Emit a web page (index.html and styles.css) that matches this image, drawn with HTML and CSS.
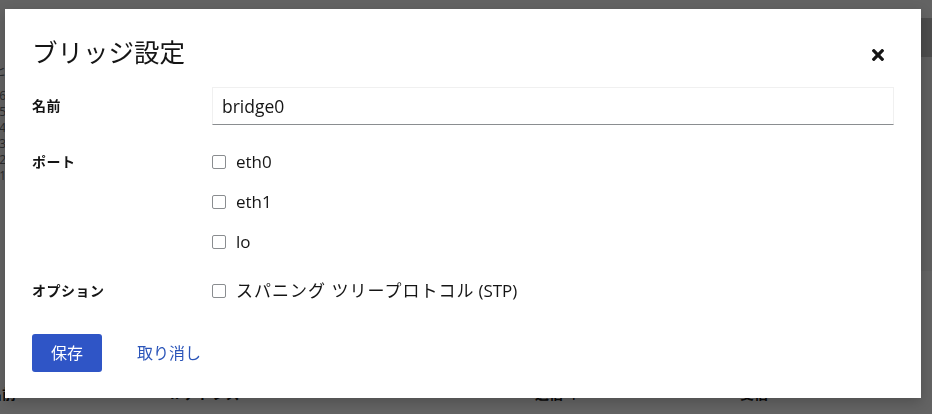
FILE: index.html
```html
<!DOCTYPE html>
<html lang="ja">
<head>
<meta charset="utf-8">
<title>ブリッジ設定</title>
<link rel="stylesheet" href="styles.css">
</head>
<body>
<div class="page">
  <div class="top">
    <div class="axis">
      <span class="axis-title">ヒ</span>
      <span>6</span><span>5</span><span>4</span><span>3</span><span>2</span><span>1</span>
    </div>
    <div class="spacer"></div>
    <div class="side">
      <div class="side-head"></div>
      <div class="side-body"></div>
      <div class="side-band"></div>
    </div>
  </div>
  <div class="thead">
    <span>名前</span><span>IPアドレス</span><span>送信 ↑</span><span>受信</span>
  </div>
</div>

<div class="backdrop">
  <div class="modal" role="dialog" aria-labelledby="mtitle">
    <header class="modal-header">
      <h1 class="modal-title" id="mtitle">ブリッジ設定</h1>
      <button class="close" aria-label="閉じる">
        <svg width="12" height="12" viewBox="0 80 352 352" aria-hidden="true"><path fill="#151515" d="M242.72 256l100.07-100.07c12.28-12.28 12.28-32.19 0-44.48l-22.24-22.24c-12.28-12.28-32.19-12.28-44.48 0L176 189.28 75.93 89.21c-12.28-12.28-32.19-12.28-44.48 0L9.21 111.45c-12.28 12.28-12.28 32.19 0 44.48L109.28 256 9.21 356.07c-12.28 12.28-12.28 32.19 0 44.48l22.24 22.24c12.28 12.28 32.2 12.28 44.48 0L176 322.72l100.07 100.07c12.28 12.28 32.2 12.28 44.48 0l22.24-22.24c12.28-12.28 12.28-32.19 0-44.48L242.72 256z"/></svg>
      </button>
    </header>
    <form class="form">
      <label class="form-label" for="name">名前</label>
      <div class="form-control"><input class="text-input" id="name" type="text" value="bridge0"></div>

      <div class="form-label">ポート</div>
      <div class="checks">
        <label class="check"><input type="checkbox"><span>eth0</span></label>
        <label class="check"><input type="checkbox"><span>eth1</span></label>
        <label class="check"><input type="checkbox"><span>lo</span></label>
      </div>

      <div class="form-label">オプション</div>
      <div class="checks">
        <label class="check"><input type="checkbox"><span class="jp-label">スパニング ツリープロトコル</span><span>(STP)</span></label>
      </div>
    </form>
    <footer class="modal-footer">
      <button class="btn btn-primary">保存</button>
      <button class="btn btn-link">取り消し</button>
    </footer>
  </div>
</div>
</body>
</html>
```
FILE: styles.css
```css
* { box-sizing: border-box; }
html, body { margin: 0; padding: 0; }
body {
  font-family: "Open Sans", "Noto Sans CJK JP", sans-serif;
  color: #151515;
  background: #fff;
  overflow: hidden;
}

/* background page */
.page {
  height: 100vh;
  display: flex;
  flex-direction: column;
  background: #fff;
}
.top { flex: 1; display: flex; }
.axis {
  width: 6px;
  display: flex;
  flex-direction: column;
  align-items: flex-end;
  padding-top: 64px;
  font-size: 12px;
  line-height: 16px;
  color: #6a6e73;
  white-space: nowrap;
}
.axis-title { margin-bottom: 8px; }
.spacer { flex: 1; }
.side {
  width: 11px;
  display: flex;
  flex-direction: column;
  padding-top: 18px;
}
.side-head { height: 39px; background: #c4c4c4; }
.side-body { height: 214px; background: #f3f3f3; }
.side-band { height: 16px; background: #fff; }
.thead {
  display: grid;
  grid-template-columns: 182px 365px 205px 1fr;
  margin-left: -12px;
  padding-bottom: 10px;
  font-size: 14px;
  font-weight: 700;
  line-height: 20px;
}

/* overlay */
.backdrop {
  position: fixed;
  inset: 0;
  background: rgba(3, 3, 3, 0.62);
  display: flex;
  align-items: flex-start;
  padding: 9px 0 0 5px;
}
.modal {
  width: 916px;
  background: #fff;
  padding: 27px 27px 26px;
  box-shadow: 0 4px 12px rgba(0, 0, 0, 0.2);
}
.modal-header {
  display: flex;
  align-items: center;
  justify-content: space-between;
}
.modal-title {
  margin: 0;
  font-size: 25.5px;
  font-weight: 400;
  line-height: 32px;
}
.close {
  border: 0;
  background: none;
  padding: 10px;
  margin: 3px 0 -3px;
  width: 32px;
  height: 32px;
  display: flex;
  align-items: center;
  justify-content: center;
  cursor: pointer;
}

.form {
  display: grid;
  grid-template-columns: 180px 1fr;
  row-gap: 25px;
  margin-top: 19px;
}
.form-label {
  font-size: 14px;
  font-weight: 700;
  line-height: 24px;
  letter-spacing: 0.5px;
}
.form-label[for] { align-self: center; }
.text-input {
  display: block;
  width: 100%;
  height: 38px;
  border: 1px solid #f0f0f0;
  border-bottom-color: #8a8d90;
  padding: 0 9px;
  font: inherit;
  font-size: 17.5px;
  color: #151515;
  outline: none;
}
.checks {
  display: flex;
  flex-direction: column;
  gap: 16px;
}
.check {
  display: flex;
  align-items: center;
  gap: 10px;
  font-size: 17px;
  line-height: 24px;
}
.check .jp-label {
  letter-spacing: 1px;
  margin-right: -6px;
}
.check input {
  appearance: none;
  -webkit-appearance: none;
  margin: 0;
  width: 14px;
  height: 14px;
  border: 1px solid #8a8d90;
  border-radius: 2px;
  background: #fff;
  flex: none;
}

.modal-footer {
  display: flex;
  align-items: center;
  gap: 19px;
  margin-top: 31px;
}
.btn {
  font: inherit;
  font-size: 16px;
  border: 0;
  cursor: pointer;
  height: 38px;
  line-height: 24px;
}
.btn-primary {
  background: #2f55c6;
  color: #fff;
  border-radius: 3px;
  padding: 0 19px;
}
.btn-link {
  background: none;
  color: #2b55b9;
  padding: 0 16px;
}
```
